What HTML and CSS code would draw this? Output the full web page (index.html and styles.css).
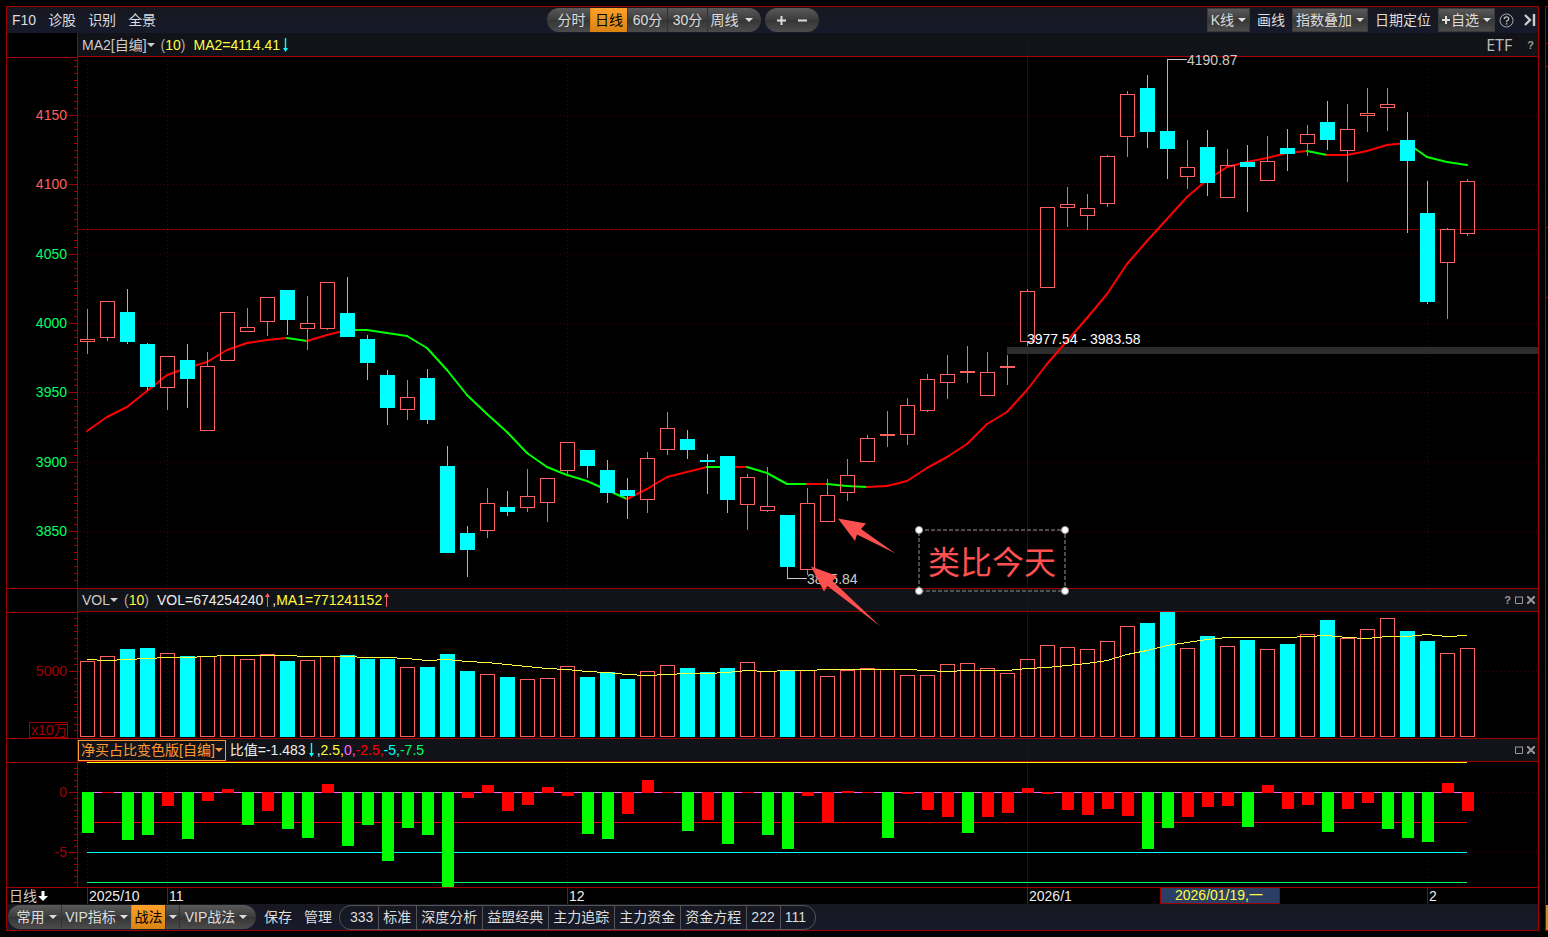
FILE: index.html
```html
<!DOCTYPE html>
<html lang="zh-CN">
<head>
<meta charset="utf-8">
<title>日线</title>
<link rel="stylesheet" href="styles.css">
</head>
<body>
<div class="shell">
  <main class="window">
    <header class="toolbar">
      <nav class="links">
        <a href="#">F10</a><a href="#">诊股</a><a href="#">识别</a><a href="#">全景</a>
      </nav>
      <div class="pill periods">
        <button class="seg">分时</button>
        <button class="seg active">日线</button>
        <button class="seg">60分</button>
        <button class="seg">30分</button>
        <button class="seg wide">周线<i class="caret"></i></button>
      </div>
      <div class="pill zoomer">
        <button class="seg" aria-label="放大"><svg width="9" height="9"><path d="M0 4.500H9M4.500 0V9" stroke="#ddd" stroke-width="2"/></svg></button>
        <button class="seg" aria-label="缩小"><svg width="9" height="9"><path d="M0 4.500H9" stroke="#ddd" stroke-width="2"/></svg></button>
      </div>
      <div class="tools">
        <button class="tool raised">K线<i class="caret"></i></button>
        <button class="tool">画线</button>
        <button class="tool raised">指数叠加<i class="caret"></i></button>
        <button class="tool">日期定位</button>
        <button class="tool raised"><svg width="8" height="8"><path d="M0 4H8M4 0V8" stroke="#ddd" stroke-width="2"/></svg>自选<i class="caret"></i></button>
        <button class="icon-btn" aria-label="帮助"><svg width="15" height="15"><circle cx="7.500" cy="7.500" r="6.500" fill="none" stroke="#aaa"/><path d="M5.300 6Q5.300 3.800 7.500 3.800T9.700 5.800Q9.700 7 8.300 7.600Q7.500 8 7.500 9.200" fill="none" stroke="#bbb" stroke-width="1.300"/><rect x="6.900" y="10.200" width="1.400" height="1.400" fill="#bbb"/></svg></button>
        <button class="icon-btn" aria-label="收起"><svg width="12" height="12"><path d="M1 1L6 6L1 11M10 0V12" fill="none" stroke="#ccc" stroke-width="2.400"/></svg></button>
      </div>
    </header>

    <div class="charts">
      <section class="panel main-panel">
        <div class="axis"><div class="axis-head"></div><svg class="scale" id="price-scale"></svg></div>
        <div class="plot">
          <div class="plot-head">
            <svg class="head-grid"></svg>
            <button class="name">MA2[自编]<i class="caret"></i></button>
            <span class="param">(<b>10</b>)</span>
            <span class="yellow">MA2=4114.41</span><svg class="trend" width="5" height="14"><path d="M2.500 0V12" stroke="#0ff" stroke-width="1.400"/><path d="M0 10H5L2.500 14Z" fill="#0ff"/></svg>
            <span class="etf">ETF</span>
            <button class="mini" aria-label="说明">?</button>
          </div>
          <svg class="canvas" id="price"></svg>
        </div>
      </section>

      <section class="panel volume-panel">
        <div class="axis"><div class="axis-head"></div><svg class="scale" id="volume-scale"></svg></div>
        <div class="plot">
          <div class="plot-head">
            <svg class="head-grid"></svg>
            <button class="name">VOL<i class="caret"></i></button>
            <span class="param">(<b>10</b>)</span>
            <span class="white">VOL=674254240</span><svg class="up" width="5" height="14"><path d="M2.500 2V14" stroke="#ff5c5c"/><path d="M0 4H5L2.500 0Z" fill="#ff5c5c"/></svg><span class="white">,</span><span class="yellow">MA1=771241152</span><svg class="up" width="5" height="14"><path d="M2.500 2V14" stroke="#ff5c5c"/><path d="M0 4H5L2.500 0Z" fill="#ff5c5c"/></svg>
            <div class="minis">
              <button class="mini" aria-label="说明">?</button>
              <button class="mini" aria-label="最大化"><svg width="8" height="8"><path d="M.5 1V7.500H7.500V1M0 1H8" fill="none" stroke="#999" /></svg></button>
              <button class="mini" aria-label="关闭"><svg width="8" height="8"><path d="M0 0L8 8M8 0L0 8" stroke="#999" stroke-width="2"/></svg></button>
            </div>
          </div>
          <svg class="canvas" id="volume"></svg>
        </div>
      </section>

      <section class="panel ratio-panel">
        <div class="axis"><div class="axis-head"></div><svg class="scale" id="ratio-scale"></svg></div>
        <div class="plot">
          <div class="plot-head">
            <svg class="head-grid"></svg>
            <button class="name selected">净买占比变色版[自编]<i class="caret"></i></button>
            <span class="white">比值=-1.483</span><svg class="trend" width="5" height="14"><path d="M2.500 0V12" stroke="#0ff" stroke-width="1.400"/><path d="M0 10H5L2.500 14Z" fill="#0ff"/></svg><span class="white">,</span><span class="yellow">2.5,</span><span class="magenta">0,</span><span class="red">-2.5,</span><span class="cyan">-5,</span><span class="green">-7.5</span>
            <div class="minis">
              <button class="mini" aria-label="最大化"><svg width="8" height="8"><path d="M.5 1V7.500H7.500V1M0 1H8" fill="none" stroke="#999" /></svg></button>
              <button class="mini" aria-label="关闭"><svg width="8" height="8"><path d="M0 0L8 8M8 0L0 8" stroke="#999" stroke-width="2"/></svg></button>
            </div>
          </div>
          <svg class="canvas" id="ratio"></svg>
        </div>
      </section>

      <section class="dates">
        <div class="period-label">日线<svg width="10" height="10"><path d="M3.500 0H6.500V5H10L5 10L0 5H3.500Z" fill="#fff"/></svg></div>
        <svg class="date-line" id="dates"></svg>
      </section>
      <svg class="notes" id="notes"></svg>
    </div>

    <footer class="toolbar bottom">
      <div class="pill groups">
        <button class="seg">常用<i class="caret"></i></button>
        <button class="seg">VIP指标<i class="caret"></i></button>
        <button class="seg active">战法</button>
        <button class="seg slim" aria-label="更多"><i class="caret"></i></button>
        <button class="seg">VIP战法<i class="caret"></i></button>
      </div>
      <button class="tool">保存</button>
      <button class="tool">管理</button>
      <div class="tabs">
        <button>333</button><button>标准</button><button>深度分析</button><button>益盟经典</button><button>主力追踪</button><button>主力资金</button><button>资金方程</button><button>222</button><button>111</button>
      </div>
    </footer>
  </main>
  <aside class="neighbour"><i></i><i></i><i></i><i></i><b></b></aside>
</div>
<script src="chart.js"></script>
</body>
</html>
```
FILE: styles.css
```css
* { box-sizing: border-box; }
body {
  margin: 0;
  background: #000;
  color: #ddd;
  font: 14px/16px "Liberation Sans", "Noto Sans CJK SC", sans-serif;
}
button {
  margin: 0;
  padding: 0;
  border: 0;
  background: none;
  color: inherit;
  font: inherit;
  white-space: nowrap;
  cursor: pointer;
}
a { color: inherit; text-decoration: none; }
svg { display: block; flex: none; }

.shell { display: flex; gap: 6px; min-height: 100vh; padding: 6px 0 6px 6px; }
.window { flex: 1; min-width: 0; display: flex; flex-direction: column; border: 1px solid #a00000; }
.neighbour { width: 3px; border: solid #a00000; border-width: 1px 0 1px 1px; display: flex; flex-direction: column; }
.neighbour i { height: 1px; background: #a00000; margin-top: 36px; }
.neighbour i:nth-child(2) { margin-top: 22px; }
.neighbour i:nth-child(3) { margin-top: 160px; }
.neighbour i:nth-child(4) { margin-top: 69px; }
.neighbour b { height: 25px; margin-top: auto; background: #c98a2b; }

/* toolbars */
.toolbar { flex: none; display: flex; align-items: center; height: 26px; background: linear-gradient(#171720, #161a2a); }
.links { display: flex; gap: 12px; padding-left: 5px; width: 540px; }
.pill { display: flex; height: 24px; border-radius: 12px; overflow: hidden; background: linear-gradient(#5a5a5a, #3c3c3c 50%, #363636 52%, #4c4c4c); }
.seg { display: flex; align-items: center; justify-content: center; border-left: 1px solid #333; padding: 0 4px; }
.seg:first-child { border-left: 0; }
.seg.active { background: linear-gradient(#ffa02a, #d98412); color: #000; border-color: #d98412; }
.periods { width: 214px; }
.periods .seg { width: 40px; }
.periods .seg:first-child { width: 43px; padding-left: 10px; }
.periods .seg.active { width: 37px; }
.periods .wide { width: 54px; gap: 6px; padding: 0 8px 0 2px; }
.caret { flex: none; width: 0; height: 0; border: 4px solid transparent; border-top-color: currentColor; border-bottom: 0; }
.zoomer { margin-left: 4px; width: 54px; gap: 12px; justify-content: center; }
.zoomer .seg { border: 0; padding: 0; }
.tools { display: flex; align-items: center; margin-left: auto; height: 24px; padding-right: 2px; }
.tool { display: flex; align-items: center; gap: 3px; height: 24px; padding: 0 7px; }
.raised { gap: 4px; padding: 0 3px; background: linear-gradient(#5a5a5a, #3c3c3c 50%, #363636 52%, #4c4c4c); border: 1px solid #3a3a3a; }
.raised svg { margin-right: -3px; }
.icon-btn { margin-left: 4px; }
.icon-btn + .icon-btn { margin-left: 10px; }

/* panels */
.charts { position: relative; flex: 1; display: flex; flex-direction: column; }
.panel { display: grid; grid-template-columns: 70px 1fr; border-bottom: 1px solid #a00000; }
.axis { display: flex; flex-direction: column; min-width: 0; }
.axis-head { flex: none; height: 24px; border-bottom: 1px solid #a00000; }
.scale { width: 100%; height: 0; flex: 1 1 0px; min-height: 0; }
.plot { display: flex; flex-direction: column; min-width: 0; border-left: 1px solid #a00000; }
.plot-head { position: relative; display: flex; align-items: center; height: 23px; padding-left: 4px; background: #121318; border-bottom: 1px solid #a00000; }
.main-panel { flex: 1; }
.main-panel .axis-head { height: 25px; }
.main-panel .plot-head { height: 24px; }
.plot-head > :not(.head-grid) { position: relative; }
.head-grid { position: absolute; inset: 0; width: 100%; height: 100%; }
.canvas { width: 100%; }
#price { height: 531px; }
#volume { height: 126px; }
#ratio { height: 125px; }
.name { display: flex; align-items: center; margin-right: 6px; color: #ccc; }
.name.selected { height: 21px; margin: 0 4px 0 -4px; padding: 0 2px; border: 1px solid #ff9933; color: #ff9933; }
.param { width: 33px; color: #aaa; }
.param b { font-weight: 400; color: #ffff40; }
.trend { margin: 0 3px; }
.up { margin: 0 2px; }
.white { color: #eee; }
.yellow { color: #ffff40; }
.magenta { color: #ff66ff; }
.red { color: #f00; }
.cyan { color: #0ff; }
.green { color: #00ff66; }
.etf { margin-left: auto; font: 16px/20px "Noto Sans", sans-serif; color: #bbb; }
.mini { color: #999; font-size: 11px; font-weight: 700; }
.etf + .mini { margin: 0 4px 0 15px; }
.minis { display: flex; align-items: center; gap: 4px; margin-left: auto; padding-right: 3px; }

.dates { display: grid; grid-template-columns: 71px 1fr; height: 16px; }
.period-label { display: flex; align-items: center; gap: 1px; padding-left: 2px; color: #ccc; }
.date-line { width: 100%; height: 16px; }
.notes { position: absolute; inset: 0; width: 100%; height: 100%; pointer-events: none; }

/* bottom bar */
.bottom { padding-left: 1px; }
.groups { width: 248px; margin-right: 1px; }
.groups .seg { width: 70px; gap: 4px; }
.groups .seg:first-child { width: 53px; padding-left: 8px; }
.groups .seg.active { width: 34px; padding: 0; }
.groups .seg.slim { width: 14px; padding: 0; }
.groups .seg:last-child { width: 77px; padding-right: 8px; }
.bottom .tool + .tool { padding-left: 5px; }
.tabs { display: flex; height: 25px; border: 1px solid #555; border-radius: 12px; overflow: hidden; }
.tabs button { padding: 0 5px 0 4px; border-left: 1px solid #555; }
.tabs button:first-child { border-left: 0; padding-left: 10px; }
.tabs button:last-child { padding-right: 9px; }

/* chart marks */
svg text { font: 14px "Liberation Sans", "Noto Sans CJK SC", sans-serif; }
.crisp { shape-rendering: crispEdges; }
svg .callout { font: 32px "Noto Sans CJK SC", sans-serif; }
```
FILE: chart.js
```js
const NS = 'http://www.w3.org/2000/svg';
const STEP = 20, FIRST = 87, CYAN = '#00ffff', COIN = '#ff6060', AXIS = '#a00000', GRID = '#38080c';

function layer(id, left, top) {
  const svg = typeof id === 'string' ? document.getElementById(id) : id;
  return add(svg, 'g', { transform: `translate(${-left} ${-top})` });
}
function add(parent, tag, attrs, text) {
  const el = document.createElementNS(NS, tag);
  for (const k in attrs) el.setAttribute(k, attrs[k]);
  if (text) el.textContent = text;
  parent.appendChild(el);
  return el;
}
function box(g, x, y, w, h, fill) { add(g, 'rect', { x, y, width: w, height: h, fill, class: 'crisp' }); }
function frame(g, x, y, w, h, stroke) {
  add(g, 'rect', { x: x + 0.5, y: y + 0.5, width: w - 1, height: h - 1, fill: 'none', stroke, class: 'crisp' });
}
function hline(g, x, y, x2, stroke, dash) {
  add(g, 'line', { x1: x, x2, y1: y + 0.5, y2: y + 0.5, stroke, 'stroke-dasharray': dash || 'none', class: 'crisp' });
}
function vline(g, x, y, y2, stroke, dash) {
  add(g, 'line', { x1: x + 0.5, x2: x + 0.5, y1: y, y2, stroke, 'stroke-dasharray': dash || 'none', class: 'crisp' });
}
function months(g) {
  [87, 167, 567, 1427].forEach(x => vline(g, x, 0, 1000, GRID, '1 3'));
  vline(g, 1027, 0, 1000, '#4a0000');
}
const cx = i => FIRST + i * STEP;

/* kind, high, body top, body bottom, low */
const candles = `r 309 339 342 354|r 301 301 338 341|c 289 312 342 344|c 343 344 387 390|r 356 356 388 410|c 344 360 379 408|r 352 366 431 431|r 312 312 361 361|r 308 327 332 332|r 297 297 322 336
c 290 290 320 335|r 296 323 329 350|r 282 282 329 330|c 277 313 337 337|c 335 339 363 380|c 370 375 408 425|r 380 397 410 420|c 369 378 420 424|c 446 466 553 553|c 526 533 550 577
r 488 503 531 538|c 491 507 512 516|r 469 496 508 512|r 478 478 503 522|r 442 442 471 475|c 450 450 466 478|c 460 470 493 503|c 478 490 496 519|r 452 458 500 513|r 412 428 450 455
c 430 439 450 459|c 454 460 462 494|c 456 456 500 513|r 474 477 505 530|r 467 506 511 512|c 515 515 567 579|r 488 503 570 575|r 479 495 522 522|r 459 475 493 501|r 435 438 462 462
r 411 434 436 447|r 398 405 435 445|r 374 379 411 412|r 355 374 383 399|r 346 371 373 383|r 352 372 396 396|r 355 366 368 385|r 289 291 342 346|r 207 207 288 288|r 187 204 208 227
r 194 208 216 230|r 155 156 204 207|r 91 94 137 157|c 75 88 132 148|c 59 131 149 179|r 140 167 177 189|c 130 147 183 196|r 149 165 198 198|c 145 162 167 212|r 136 161 181 181
c 129 148 154 171|r 125 134 144 156|c 101 122 140 150|r 104 129 151 182|r 88 113 116 132|r 88 104 108 131|c 112 140 161 233|c 181 213 302 304|r 228 229 263 319|r 179 181 234 236`
  .split(/[|\n]/).map(s => s.split(' '));

const ma = [431,417,407,391,375,368,362,350,343,340,338,341,335,330,330,333,336,348,370,395,414,432,453,467,475,481,490,499,489,477,472,467,467,467,473,484,484,484,486,487,486,481,468,457,444,424,412,390,364,341,318,294,264,241,219,197,180,167,162,158,153,151,155,155,151,145,143,157,162,165];
const maGreen = i => i === 10 || (i >= 13 && i < 27) || i === 31 || (i >= 33 && i < 36) || i === 37 || i === 38 || i === 61 || i >= 66;

const volumes = [661,656,649,648,653,656,656,655,659,654,661,660,656,655,659,659,667,667,654,671,674,677,679,678,666,677,672,679,671,665,668,672,668,662,671,670,670,676,670,668,669,675,675,664,663,668,673,659,645,647,649,641,626,623,612,648,636,646,640,649,644,634,620,638,629,618,631,641,653,648];
const volumeMa = [659,660,659,658,657,657,656,655,655,655,655,656,656,656,657,657,658,660,659,661,662,664,666,668,669,671,672,674,675,674,673,673,672,670,671,670,670,669,669,669,669,669,670,671,670,670,670,668,667,665,663,660,654,650,645,642,639,637,637,637,637,636,635,637,638,636,636,634,636,635];

const ratios = 'g833 r793 g840 g835 r806 g839 r801 r789 g825 r811 g829 g838 r784 g846 g825 g861 g828 g835 g887 r798 r785 r811 r805 r787 r796 g834 g839 r814 r780 r793 g831 r820 g844 r793 g835 g849 r796 r823 r791 r793 g838 r794 r810 r817 g833 r817 r813 r788 r794 r810 r815 r809 r816 g849 g828 r817 r807 r806 g827 r785 r809 r805 g832 r809 r803 g829 g838 g842 r783 r811'.split(' ');

/* grid lines behind the indicator headings */
document.querySelectorAll('.head-grid').forEach(svg => months(layer(svg, 78, 0)));

/* price plot */
const price = layer('price', 78, 57);
months(price);
[115, 184, 254, 323, 392, 462, 531].forEach(y => hline(price, 80, y, 4000, GRID, '1 3'));
hline(price, 78, 229, 4000, '#8c0000', '3 1');
box(price, 1007, 347, 3000, 7, '#2d2d2d');
for (let i = 0; i < ma.length - 1; i++) {
  add(price, 'line', { x1: cx(i), y1: ma[i], x2: cx(i + 1), y2: ma[i + 1], stroke: maGreen(i) ? '#00ff00' : '#ff0000', 'stroke-width': 2, 'stroke-linecap': 'round' });
}
candles.forEach(([kind, ...v], i) => {
  const [high, top, bottom, low] = v.map(Number), x = cx(i);
  if (kind === 'c') {
    box(price, x, high, 1, low - high, CYAN);
    box(price, x - 7, top, 15, bottom - top, CYAN);
  } else {
    box(price, x, high, 1, top - high, COIN);
    box(price, x, bottom, 1, low - bottom, COIN);
    frame(price, x - 7, top, 15, bottom - top, COIN);
  }
});

/* volume plot */
const volume = layer('volume', 78, 612);
months(volume);
hline(volume, 80, 671, 4000, GRID, '1 3');
volumes.forEach((y, i) => (candles[i][0] === 'c' ? box : frame)(volume, cx(i) - 7, y, 15, 737 - y, candles[i][0] === 'c' ? CYAN : COIN));
add(volume, 'polyline', { points: volumeMa.map((y, i) => `${cx(i)},${y + 0.5}`).join(' '), fill: 'none', stroke: '#ffff40', class: 'crisp' });

/* ratio plot */
const ratio = layer('ratio', 78, 762);
months(ratio);
[792, 852].forEach(y => hline(ratio, 80, y, 4000, GRID, '1 3'));
[[762, '#ffff00'], [792, '#ff66ff'], [822, '#ff0000'], [852, '#00ffff'], [882, '#00ff66']].forEach(([y, c]) => hline(ratio, 87, y, 1467, c));
ratios.forEach((s, i) => {
  const y = Number(s.slice(1));
  box(ratio, cx(i) - 5, Math.min(y, 792), 12, y < 792 ? 793 - y : y - 792, s[0] === 'g' ? '#00ff00' : '#ff0000');
});

/* scales */
function ticks(g, base, gap, from, to) {
  for (let k = -80; k < 80; k++) {
    const y = Math.round(base + k * gap);
    if (y >= from && y <= to) hline(g, 74, y, 77, AXIS);
  }
}
function mark(g, y, label, fill) {
  hline(g, 69, y, 77, AXIS);
  add(g, 'text', { x: 67, y: y + 5, 'text-anchor': 'end', fill }, label);
}
const ps = layer('price-scale', 7, 58);
ticks(ps, 115, 6.935, 60, 584);
[[115, 4150], [184, 4100], [254, 4050], [323, 4000], [392, 3950], [462, 3900], [531, 3850]].forEach(([y, n]) => mark(ps, y, n, n > 4068 ? COIN : '#00ff66'));
const vs = layer('volume-scale', 7, 613);
ticks(vs, 671, 6.6, 616, 732);
mark(vs, 671, '5000', AXIS);
frame(vs, 29, 722, 39, 16, AXIS);
add(vs, 'text', { x: 31, y: 735, fill: AXIS }, 'x10万');
const rs = layer('ratio-scale', 7, 763);
ticks(rs, 792, 6, 765, 884);
mark(rs, 792, '0', AXIS);
mark(rs, 852, '-5', AXIS);

/* dates */
const dates = layer('dates', 78, 888);
[[87, '2025/10'], [167, '11'], [567, '12'], [1027, '2026/1'], [1427, '2']].forEach(([x, t]) => {
  vline(dates, x, 888, 904, AXIS);
  add(dates, 'text', { x: x + 2, y: 901, fill: '#eee' }, t);
});
box(dates, 1160, 887, 120, 17, '#2b3f66');
frame(dates, 1160, 887, 120, 17, AXIS);
add(dates, 'text', { x: 1175, y: 900, fill: '#ffff40' }, '2026/01/19,一');

/* price labels and hand-drawn notes */
const notes = layer('notes', 7, 33);
hline(notes, 1167, 59, 1187, '#ccc');
add(notes, 'text', { x: 1187, y: 65, fill: '#ccc' }, '4190.87');
hline(notes, 787, 578, 807, '#ccc');
add(notes, 'text', { x: 807, y: 584, fill: '#ccc' }, '3815.84');
add(notes, 'text', { x: 1027, y: 344, fill: '#fff' }, '3977.54 - 3983.58');
add(notes, 'path', { d: 'M838 518.500L866 523.500L861 529L895.500 553.500L857 534.500L855 541Z', fill: '#ff5050' });
add(notes, 'path', { d: 'M811 566.500L837 576L832.500 581L880.500 626.500L827.500 586L824 591.500Z', fill: '#ff5050' });
add(notes, 'rect', { x: 919, y: 530, width: 146, height: 61, fill: 'none', stroke: '#666', 'stroke-width': 1.5, 'stroke-dasharray': '4 2' });
[[919, 530], [1065, 530], [919, 591], [1065, 591]].forEach(([x, y]) => add(notes, 'circle', { cx: x, cy: y, r: 3.5, fill: '#fff', stroke: '#999' }));
add(notes, 'text', { x: 928, y: 574, fill: '#ff5050', class: 'callout' }, '类比今天');
```
